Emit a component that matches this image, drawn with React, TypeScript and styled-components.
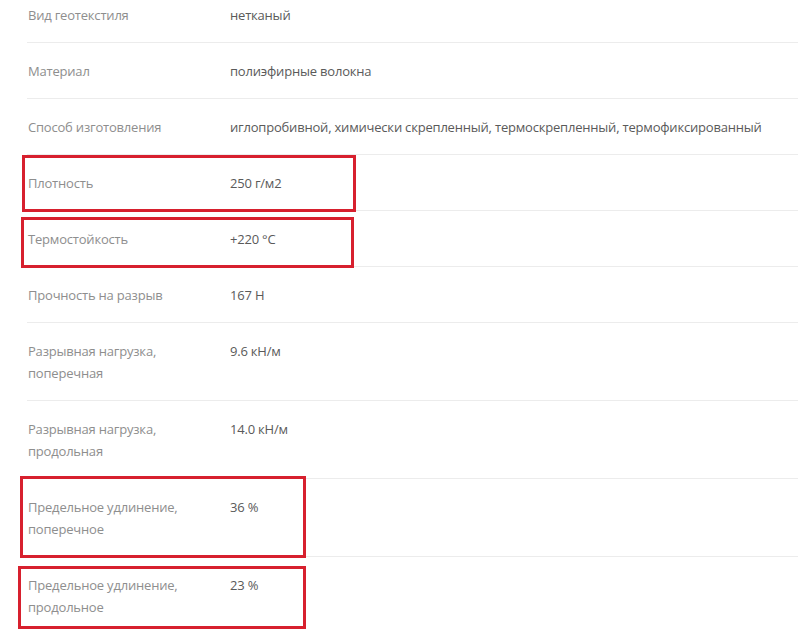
import styled, { createGlobalStyle } from 'styled-components';

type Spec = {
  label: string;
  value: string;
  mark?: { top: number; left: number; width: number; height: number };
};

const SPECS: Spec[] = [
  { label: 'Вид геотекстиля', value: 'нетканый' },
  { label: 'Материал', value: 'полиэфирные волокна' },
  {
    label: 'Способ изготовления',
    value: 'иглопробивной, химически скрепленный, термоскрепленный, термофиксированный',
  },
  { label: 'Плотность', value: '250 г/м2', mark: { top: 0, left: -5, width: 334, height: 57 } },
  { label: 'Термостойкость', value: '+220 °C', mark: { top: 6, left: -6, width: 333, height: 51 } },
  { label: 'Прочность на разрыв', value: '167 Н' },
  { label: 'Разрывная нагрузка, поперечная', value: '9.6 кН/м' },
  { label: 'Разрывная нагрузка, продольная', value: '14.0 кН/м' },
  {
    label: 'Предельное удлинение, поперечное',
    value: '36 %',
    mark: { top: -3, left: -7, width: 286, height: 82 },
  },
  {
    label: 'Предельное удлинение, продольное',
    value: '23 %',
    mark: { top: 9, left: -9, width: 288, height: 63 },
  },
];

const GlobalStyle = createGlobalStyle`
  html, body {
    margin: 0;
    padding: 0;
    background: #fff;
  }
  body {
    font-family: 'Open Sans', 'Noto Sans', sans-serif;
    overflow: hidden;
  }
`;

const Table = styled.div`
  margin: -13px 11px 0 27px;
  display: flex;
  flex-direction: column;
`;

const Row = styled.div`
  position: relative;
  display: grid;
  grid-template-columns: 202px 1fr;
  padding: 17px 0 16px 1px;
  border-bottom: 1px solid #ececec;
  font-size: 13px;
  line-height: 22px;
  letter-spacing: -0.2px;
`;

const Label = styled.div`
  color: #8e8e8e;
  max-width: 160px;
`;

const Value = styled.div`
  color: #5a5a5a;
`;

const Highlight = styled.div`
  position: absolute;
  box-sizing: border-box;
  border: 3px solid #d7202e;
  pointer-events: none;
`;

export default function App() {
  return (
    <>
      <GlobalStyle />
      <Table>
        {SPECS.map((s) => (
          <Row key={s.label}>
            <Label>{s.label}</Label>
            <Value>{s.value}</Value>
            {s.mark && (
              <Highlight
                style={{
                  top: s.mark.top,
                  left: s.mark.left,
                  width: s.mark.width,
                  height: s.mark.height,
                }}
              />
            )}
          </Row>
        ))}
      </Table>
    </>
  );
}
